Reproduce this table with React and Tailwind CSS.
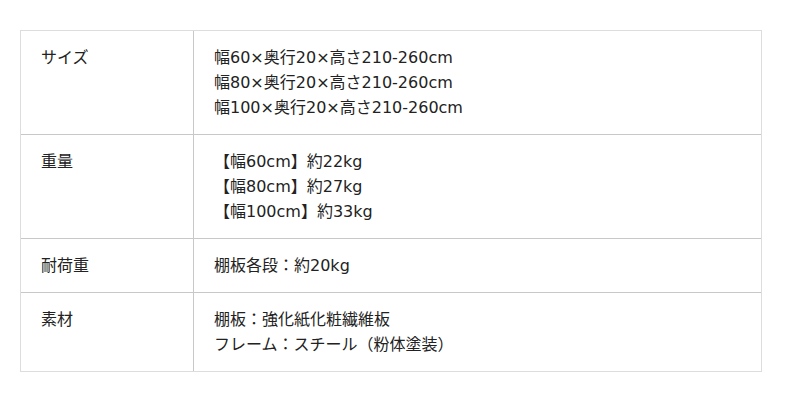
export default function App() {
  const rows = [
    { k: "サイズ", v: ["幅60×奥行20×高さ210-260cm", "幅80×奥行20×高さ210-260cm", "幅100×奥行20×高さ210-260cm"] },
    { k: "重量", v: ["【幅60cm】約22kg", "【幅80cm】約27kg", "【幅100cm】約33kg"] },
    { k: "耐荷重", v: ["棚板各段：約20kg"] },
    { k: "素材", v: ["棚板：強化紙化粧繊維板", "フレーム：スチール（粉体塗装）"] },
  ];
  return (
    <div className="w-[800px] h-[402px] bg-white pt-[30px] pl-[20px] font-['DejaVu_Sans','Noto_Sans_CJK_JP',sans-serif]">
      <div className="w-[742px] border border-[#dddddd] text-[16px] leading-[25px] text-[#222]">
        {rows.map((r, i) => (
          <div key={i} className={i > 0 ? "flex border-t border-[#c8c8c8]" : "flex"}>
            <div className="w-[173px] shrink-0 border-r border-[#c8c8c8] py-[14px] pl-[20px]">{r.k}</div>
            <div className="py-[14px] pl-[20px]">
              {r.v.map((l, j) => (
                <div key={j}>{l}</div>
              ))}
            </div>
          </div>
        ))}
      </div>
    </div>
  );
}
